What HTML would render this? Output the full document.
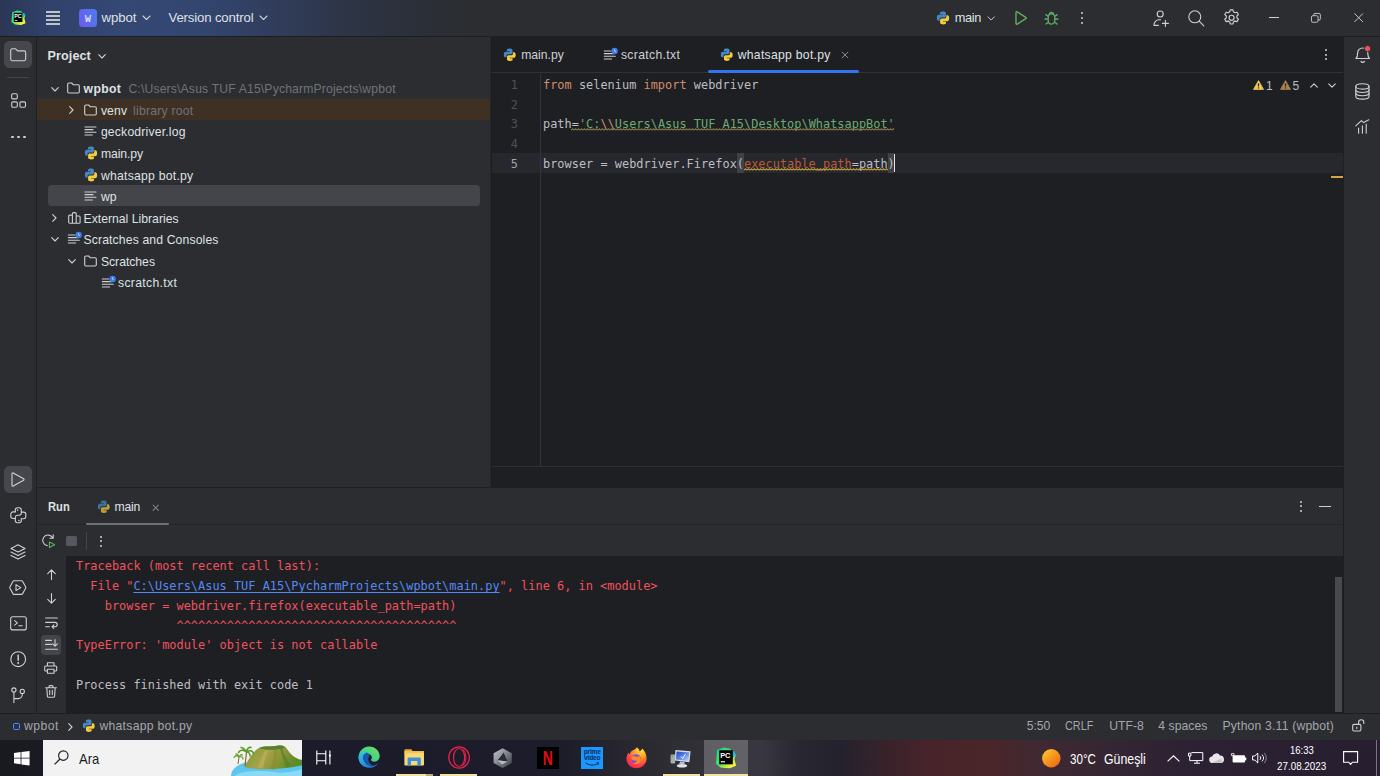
<!DOCTYPE html>
<html><head><meta charset="utf-8"><title>wpbot – whatsapp bot.py</title>
<style>
*{box-sizing:border-box;margin:0;padding:0}
html,body{width:1380px;height:776px;overflow:hidden;background:#1E1F22}
body{position:relative;font-family:"Liberation Sans",sans-serif;font-size:12.2px;color:#DFE1E5;-webkit-font-smoothing:antialiased}
.abs{position:absolute}
.t{position:absolute;white-space:pre;line-height:16px}
.mono{font-family:"DejaVu Sans Mono","Liberation Mono",monospace;font-size:11.9px;letter-spacing:0.02px}
svg{position:absolute;overflow:visible}
.ic{fill:none;stroke:#CED0D6;stroke-width:1.1;stroke-linecap:round;stroke-linejoin:round}
#titlebar{left:0;top:0;width:1380px;height:36px;background:linear-gradient(90deg,#2B3655 0px,#31426B 50px,#344874 120px,#334670 200px,#303C5A 280px,#2D3445 350px,#2B2F37 420px,#2B2D30 480px)}
#lstripe{left:0;top:36px;width:37px;height:677px;background:#2B2D30;border-right:1px solid #1E1F22}
#rstripe{left:1343px;top:36px;width:37px;height:677px;background:#2B2D30;border-left:1px solid #1E1F22}
#project{left:37px;top:36px;width:453px;height:451px;background:#2B2D30}
#editor{left:492px;top:36px;width:851px;height:452px;background:#1E1F22}
#run{left:37px;top:488.4px;width:1306px;height:224.6px;background:#2B2D30}
#status{left:0;top:712.8px;width:1380px;height:27px;background:#2B2D30;border-top:1px solid #1E1F22}
#taskbar{left:0;top:739.7px;width:1380px;height:36.3px;background:linear-gradient(90deg,#19191F 0,#1A1A24 40px,#1B1B29 300px,#1C1C2A 560px,#2A2930 640px,#34333A 720px,#393840 760px,#282630 800px,#24222E 840px,#36222A 880px,#48242A 930px,#4A2529 990px,#3F2932 1040px,#342633 1110px,#2B2133 1200px,#271E30 1380px)}
.muted{color:#6F737A}
.row{position:absolute;left:0;width:453px;height:21.56px}
</style></head><body>

<div id="titlebar" class="abs">
<!-- pycharm logo -->
<svg style="left:10.5px;top:10px" width="15" height="15.5" viewBox="0 0 15 15.5">
<defs><linearGradient id="pcg" x1="0" y1="0" x2="1" y2="1"><stop offset="0" stop-color="#21D789"/><stop offset="0.45" stop-color="#3BE06A"/><stop offset="0.8" stop-color="#E8F03C"/><stop offset="1" stop-color="#FCF84A"/></linearGradient></defs>
<path d="M1.2 2.2 L6 0.4 L10.6 1.2 L11.4 3.4 L14.4 5.4 L13.4 8.6 L14.6 13.2 L10.2 15 L4 14.6 L0.4 12 Z" fill="url(#pcg)"/>
<path d="M10.8 3.2 L13.2 3 L14.4 5.6 L12.6 7.6 Z" fill="#07C3F2"/>
<rect x="2.8" y="2.8" width="8.6" height="9.2" fill="#000"/>
<text x="3.3" y="7.6" font-family="Liberation Sans,sans-serif" font-weight="bold" font-size="5.4" fill="#fff" letter-spacing="-0.2">PC</text>
<rect x="3.8" y="10" width="2.6" height="0.9" fill="#ddd"/>
</svg>
<!-- hamburger -->
<div class="abs" style="left:45.7px;top:11.35px;width:14.4px;height:1.3px;background:#BFC2C9"></div>
<div class="abs" style="left:45.7px;top:15.35px;width:14.4px;height:1.3px;background:#BFC2C9"></div>
<div class="abs" style="left:45.7px;top:19.3px;width:14.4px;height:1.3px;background:#BFC2C9"></div>
<div class="abs" style="left:45.7px;top:23.3px;width:14.4px;height:1.3px;background:#BFC2C9"></div>
<!-- project badge -->
<div class="abs" style="left:79px;top:8.8px;width:18px;height:18px;border-radius:3.5px;background:linear-gradient(75deg,#6D5AF0,#4B7BEF)"></div>
<div class="t" style="left:79px;top:11.2px;width:18px;text-align:center;font-family:'Liberation Mono',monospace;font-size:11.6px;color:#fff;letter-spacing:0;transform:scaleX(0.84)">W</div>
<div class="t" id="tt_wpbot" style="letter-spacing:-0.090px;left:101.5px;top:9.6px;font-size:13.2px">wpbot</div>
<svg style="left:142px;top:15px" width="9" height="6" viewBox="0 0 9 6"><path class="ic" d="M1 1 L4.5 4.5 L8 1"/></svg>
<div class="t" id="tt_vc" style="letter-spacing:-0.154px;left:168.5px;top:9.6px;font-size:13.2px">Version control</div>
<svg style="left:259px;top:15px" width="9" height="6" viewBox="0 0 9 6"><path class="ic" d="M1 1 L4.5 4.5 L8 1"/></svg>
</div>
<div id="tbline" class="abs" style="left:0;top:35.8px;width:1380px;height:1px;background:#1E1F22;z-index:5"></div>

<!--STRIPE-->
<div id="lstripe" class="abs"></div>
<div class="abs" style="left:4.2px;top:41px;width:27.8px;height:27.2px;border-radius:5.5px;background:#45474C"></div>
<svg style="left:10px;top:48.2px" width="16.4" height="13.4" viewBox="0 0 16.4 13.4"><path class="ic" stroke-width="1.4" d="M0.7 2.4 a1.6 1.6 0 0 1 1.6-1.6 h3.3 l2 2.1 h6.5 a1.6 1.6 0 0 1 1.6 1.6 v6.6 a1.6 1.6 0 0 1-1.6 1.6 h-11.8 a1.6 1.6 0 0 1-1.6-1.6 z"/></svg>
<div class="abs" style="left:7.3px;top:77px;width:21.6px;height:1px;background:#43454A"></div>
<svg style="left:10.5px;top:93.4px" width="16" height="15.5" viewBox="0 0 16 15.5"><g class="ic" stroke-width="1.4"><rect x="0.7" y="0.7" width="5.6" height="5.2" rx="1.2"/><rect x="0.7" y="8.9" width="5.6" height="5.4" rx="1.2"/><rect x="8.9" y="8.9" width="5.6" height="5.4" rx="1.2"/></g></svg>
<div class="abs" style="left:11.0px;top:135.6px;width:2.8px;height:2.8px;border-radius:50%;background:#CED0D6"></div>
<div class="abs" style="left:16.8px;top:135.6px;width:2.8px;height:2.8px;border-radius:50%;background:#CED0D6"></div>
<div class="abs" style="left:22.8px;top:135.6px;width:2.8px;height:2.8px;border-radius:50%;background:#CED0D6"></div>
<div class="abs" style="left:4.2px;top:466px;width:27.8px;height:27.2px;border-radius:5.5px;background:#45474C"></div>
<svg style="left:11.4px;top:472px" width="14" height="15" viewBox="0 0 14 15"><path class="ic" stroke-width="1.4" d="M1 1.6 a0.8 0.8 0 0 1 1.2-0.7 l10.4 5.9 a0.8 0.8 0 0 1 0 1.4 l-10.4 5.9 a0.8 0.8 0 0 1-1.2-0.7 z"/></svg>
<svg style="left:9.8px;top:507px" width="16.6" height="16.6" viewBox="0 0 16.6 16.6"><g class="ic" stroke-width="1.4"><path d="M5.3 4.7 v-1.7 a2.2 2.2 0 0 1 2.2-2.2 h1.6 a2.2 2.2 0 0 1 2.2 2.2 v3.1 a2.2 2.2 0 0 1-2.2 2.2 h-1.6 a2.2 2.2 0 0 0-2.2 2.2 v3.1 a2.2 2.2 0 0 0 2.2 2.2 h1.6 a2.2 2.2 0 0 0 2.2-2.2 v-1.7"/><path d="M5.3 4.9 h-2.3 a2.2 2.2 0 0 0-2.2 2.2 v2.2 a2.2 2.2 0 0 0 2.2 2.2 h2.2"/><path d="M11.3 11.7 h2.3 a2.2 2.2 0 0 0 2.2-2.2 v-2.2 a2.2 2.2 0 0 0-2.2-2.2 h-2.2"/></g><circle cx="7.6" cy="3.1" r=".8" fill="#CED0D6"/><circle cx="9" cy="13.5" r=".8" fill="#CED0D6"/></svg>
<svg style="left:10.2px;top:543.5px" width="16" height="16" viewBox="0 0 16 16"><g class="ic" stroke-width="1.4"><path d="M8 0.8 L15 4.4 L8 8 L1 4.4 Z"/><path d="M1 8 L8 11.6 L15 8"/><path d="M1 11.4 L8 15 L15 11.4"/></g></svg>
<svg style="left:9.4px;top:579.6px" width="17.6" height="15.2" viewBox="0 0 17.6 15.2"><g class="ic" stroke-width="1.4"><path d="M4.9 0.8 h7.8 a1 1 0 0 1 .85.5 l3.2 5.8 a1 1 0 0 1 0 1 l-3.2 5.8 a1 1 0 0 1-.85.5 h-7.8 a1 1 0 0 1-.85-.5 l-3.2-5.8 a1 1 0 0 1 0-1 l3.2-5.8 a1 1 0 0 1 .85-.5z"/><path d="M7 4.6 v6 l4.8-3z"/></g></svg>
<svg style="left:9.6px;top:616px" width="17" height="14.6" viewBox="0 0 17 14.6"><g class="ic" stroke-width="1.4"><rect x="0.7" y="0.7" width="15.6" height="13.2" rx="2"/><path d="M4.6 4.6 l2.8 2.3 -2.8 2.3 M8.8 9.8 h3.4"/></g></svg>
<svg style="left:10px;top:651.2px" width="16.4" height="16.4" viewBox="0 0 16.4 16.4"><g class="ic" stroke-width="1.4"><circle cx="8.2" cy="8.2" r="7.4"/><path d="M8.2 4.2 v5" stroke-width="1.5"/></g><circle cx="8.2" cy="11.9" r="1" fill="#CED0D6"/></svg>
<svg style="left:11px;top:686.6px" width="14.4" height="16.4" viewBox="0 0 14.4 16.4"><g class="ic" stroke-width="1.4"><circle cx="2.9" cy="3" r="2.1"/><circle cx="11.3" cy="4.4" r="2.1"/><path d="M2.9 5.2 v10.4 M2.9 11.6 h4.4 a4 4 0 0 0 4-4 v-1"/></g></svg>
<!--PROJECT-->
<div id="project" class="abs"></div>
<div class="abs" style="left:37px;top:98.5px;width:453px;height:21.7px;background:#3E3124"></div>
<div class="abs" style="left:48px;top:185.1px;width:432px;height:21.3px;background:#43454A;border-radius:4px"></div>
<div class="t" id="p_title" style="letter-spacing:0.092px;left:47.5px;top:47.8px;font-weight:bold;font-size:12.6px;letter-spacing:0.1px">Project</div>
<svg style="left:98.2px;top:53.6px" width="8" height="5" viewBox="0 0 8 5"><path class="ic" d="M0.7 0.7 L4 4 L7.3 0.7"/></svg>
<svg style="left:51px;top:86.5px" width="8" height="5" viewBox="0 0 8 5"><path class="ic" d="M0.7 0.7 L4 4 L7.3 0.7"/></svg>
<svg style="left:66.8px;top:82.3px" width="13" height="12" viewBox="0 0 13 12"><path class="ic" d="M0.7 2.2 a1.2 1.2 0 0 1 1.2-1.2 h2.7 l1.6 1.7 h4.9 a1.2 1.2 0 0 1 1.2 1.2 v5.9 a1.2 1.2 0 0 1-1.2 1.2 h-9.2 a1.2 1.2 0 0 1-1.2-1.2 z"/></svg>
<div class="t" id="p_wpbot" style="letter-spacing:0.361px;left:83.6px;top:81.30px;font-weight:bold;letter-spacing:0.35px">wpbot</div>
<div class="t" id="p_path" style="letter-spacing:0.157px;left:128.4px;top:81.30px;color:#6F737A">C:\Users\Asus TUF A15\PycharmProjects\wpbot</div>
<svg style="left:69px;top:106.06px" width="5" height="8" viewBox="0 0 5 8"><path class="ic" d="M0.7 0.7 L4 4 L0.7 7.3"/></svg>
<svg style="left:84px;top:103.86px" width="13" height="12" viewBox="0 0 13 12"><path class="ic" d="M0.7 2.2 a1.2 1.2 0 0 1 1.2-1.2 h2.7 l1.6 1.7 h4.9 a1.2 1.2 0 0 1 1.2 1.2 v5.9 a1.2 1.2 0 0 1-1.2 1.2 h-9.2 a1.2 1.2 0 0 1-1.2-1.2 z"/></svg>
<div class="t" id="p_venv" style="letter-spacing:0.129px;left:100.9px;top:102.86px;">venv</div>
<div class="t" id="p_lib" style="letter-spacing:0.237px;left:133px;top:102.86px;color:#6F737A">library root</div>
<svg style="left:84.9px;top:126.42px" width="12" height="10" viewBox="0 0 12 10"><path class="ic" stroke-linecap="butt" d="M0 1 h11 M0 3.65 h8 M0 6.3 h11 M0 8.95 h7.3"/></svg>
<div class="t" id="p_gecko" style="letter-spacing:0.187px;left:100.9px;top:124.42px;">geckodriver.log</div>
<svg style="left:83.5px;top:146.18px" width="14" height="14" viewBox="0 0 14 14"><path fill="#4786C6" d="M6.9.6c-3.1 0-2.9 1.35-2.9 1.35v1.4h2.95v.42H2.83S.85 3.55.85 6.68c0 3.13 1.73 3.02 1.73 3.02h1.03V8.25s-.06-1.73 1.7-1.73h2.93s1.65.03 1.65-1.6V2.24S10.14.6 6.9.6z"/><path fill="#F5CC3C" d="M7.1 13.4c3.1 0 2.9-1.35 2.9-1.35v-1.4H7.05v-.42h4.12s1.98.22 1.98-2.91c0-3.13-1.73-3.02-1.73-3.02h-1.03v1.45s.06 1.73-1.7 1.73H5.76s-1.65-.03-1.65 1.6v2.68S3.86 13.4 7.1 13.4z"/></svg>
<div class="t" id="p_main" style="letter-spacing:-0.090px;left:100.9px;top:145.98px;">main.py</div>
<svg style="left:83.5px;top:167.74px" width="14" height="14" viewBox="0 0 14 14"><path fill="#4786C6" d="M6.9.6c-3.1 0-2.9 1.35-2.9 1.35v1.4h2.95v.42H2.83S.85 3.55.85 6.68c0 3.13 1.73 3.02 1.73 3.02h1.03V8.25s-.06-1.73 1.7-1.73h2.93s1.65.03 1.65-1.6V2.24S10.14.6 6.9.6z"/><path fill="#F5CC3C" d="M7.1 13.4c3.1 0 2.9-1.35 2.9-1.35v-1.4H7.05v-.42h4.12s1.98.22 1.98-2.91c0-3.13-1.73-3.02-1.73-3.02h-1.03v1.45s.06 1.73-1.7 1.73H5.76s-1.65-.03-1.65 1.6v2.68S3.86 13.4 7.1 13.4z"/></svg>
<div class="t" id="p_wa" style="letter-spacing:0.251px;left:100.9px;top:167.54px;">whatsapp bot.py</div>
<svg style="left:84.9px;top:191.10000000000002px" width="12" height="10" viewBox="0 0 12 10"><path class="ic" stroke-linecap="butt" d="M0 1 h11 M0 3.65 h8 M0 6.3 h11 M0 8.95 h7.3"/></svg>
<div class="t" id="p_wp" style="letter-spacing:-0.062px;left:100.9px;top:189.10px;">wp</div>
<svg style="left:52px;top:213.85999999999999px" width="5" height="8" viewBox="0 0 5 8"><path class="ic" d="M0.7 0.7 L4 4 L0.7 7.3"/></svg>
<svg style="left:68px;top:211.66px" width="13" height="12" viewBox="0 0 13 12"><path class="ic" d="M0.7 4.2 a1.1 1.1 0 0 1 1.1-1.1 h2.6 v8.2 h-2.6 a1.1 1.1 0 0 1-1.1-1.1z M4.4 1.7 a1.1 1.1 0 0 1 1.1-1.1 h1.6 a1.1 1.1 0 0 1 1.1 1.1 v9.6 h-3.8z M8.2 4 h2.8 a1.1 1.1 0 0 1 1.1 1.1 v5.1 a1.1 1.1 0 0 1-1.1 1.1 h-2.8z"/></svg>
<div class="t" id="p_ext" style="letter-spacing:0.015px;left:83.5px;top:210.66px;">External Libraries</div>
<svg style="left:51px;top:237.42px" width="8" height="5" viewBox="0 0 8 5"><path class="ic" d="M0.7 0.7 L4 4 L7.3 0.7"/></svg>
<svg style="left:67.5px;top:232.42px" width="14" height="12" viewBox="0 0 14 12"><path class="ic" stroke-linecap="butt" d="M0.3 3 h6.5 M0.3 5.65 h9.5 M0.3 8.3 h11 M0.3 10.95 h7.3"/><circle cx="10.6" cy="3" r="3.2" fill="#3D7DEB"/><path d="M10.6 1.4 v1.7 l1.1 .6" stroke="#fff" stroke-width=".7" fill="none"/></svg>
<div class="t" id="p_sc" style="letter-spacing:0.134px;left:83.5px;top:232.22px;">Scratches and Consoles</div>
<svg style="left:68.3px;top:258.98px" width="8" height="5" viewBox="0 0 8 5"><path class="ic" d="M0.7 0.7 L4 4 L7.3 0.7"/></svg>
<svg style="left:84px;top:254.78000000000003px" width="13" height="12" viewBox="0 0 13 12"><path class="ic" d="M0.7 2.2 a1.2 1.2 0 0 1 1.2-1.2 h2.7 l1.6 1.7 h4.9 a1.2 1.2 0 0 1 1.2 1.2 v5.9 a1.2 1.2 0 0 1-1.2 1.2 h-9.2 a1.2 1.2 0 0 1-1.2-1.2 z"/></svg>
<div class="t" id="p_scr" style="letter-spacing:-0.012px;left:100.9px;top:253.78px;">Scratches</div>
<svg style="left:101.8px;top:275.53999999999996px" width="14" height="12" viewBox="0 0 14 12"><path class="ic" stroke-linecap="butt" d="M0.3 3 h6.5 M0.3 5.65 h9.5 M0.3 8.3 h11 M0.3 10.95 h7.3"/><circle cx="10.6" cy="3" r="3.2" fill="#3D7DEB"/><path d="M10.6 1.4 v1.7 l1.1 .6" stroke="#fff" stroke-width=".7" fill="none"/></svg>
<div class="t" id="p_stxt" style="letter-spacing:0.329px;left:118px;top:275.34px;">scratch.txt</div>
<!--EDITOR-->
<div id="editor" class="abs"></div>
<div class="abs" style="left:490px;top:36.8px;width:1px;height:450.4px;background:#26272A"></div><div class="abs" style="left:491px;top:36.8px;width:1px;height:450.4px;background:#1B1C1E"></div>
<div class="abs" style="left:492px;top:72.2px;width:851px;height:1px;background:#303236"></div>
<svg style="left:503px;top:48.3px" width="13.5" height="13.5" viewBox="0 0 14 14"><path fill="#4786C6" d="M6.9.6c-3.1 0-2.9 1.35-2.9 1.35v1.4h2.95v.42H2.83S.85 3.55.85 6.68c0 3.13 1.73 3.02 1.73 3.02h1.03V8.25s-.06-1.73 1.7-1.73h2.93s1.65.03 1.65-1.6V2.24S10.14.6 6.9.6z"/><path fill="#F5CC3C" d="M7.1 13.4c3.1 0 2.9-1.35 2.9-1.35v-1.4H7.05v-.42h4.12s1.98.22 1.98-2.91c0-3.13-1.73-3.02-1.73-3.02h-1.03v1.45s.06 1.73-1.7 1.73H5.76s-1.65-.03-1.65 1.6v2.68S3.86 13.4 7.1 13.4z"/></svg>
<div class="t" id="e_t1" style="letter-spacing:0.002px;left:521.2px;top:47.2px;color:#CED0D6">main.py</div>
<svg style="left:603.5px;top:48.4px" width="14" height="12" viewBox="0 0 14 12"><path class="ic" stroke-linecap="butt" d="M0.3 3 h6.5 M0.3 5.65 h9.5 M0.3 8.3 h11 M0.3 10.95 h7.3"/><circle cx="10.6" cy="3" r="3.2" fill="#3D7DEB"/><path d="M10.6 1.4 v1.7 l1.1 .6" stroke="#fff" stroke-width=".7" fill="none"/></svg>
<div class="t" id="e_t2" style="letter-spacing:0.338px;left:620.9px;top:47.2px;color:#CED0D6">scratch.txt</div>
<svg style="left:719.5px;top:48.3px" width="13.5" height="13.5" viewBox="0 0 14 14"><path fill="#4786C6" d="M6.9.6c-3.1 0-2.9 1.35-2.9 1.35v1.4h2.95v.42H2.83S.85 3.55.85 6.68c0 3.13 1.73 3.02 1.73 3.02h1.03V8.25s-.06-1.73 1.7-1.73h2.93s1.65.03 1.65-1.6V2.24S10.14.6 6.9.6z"/><path fill="#F5CC3C" d="M7.1 13.4c3.1 0 2.9-1.35 2.9-1.35v-1.4H7.05v-.42h4.12s1.98.22 1.98-2.91c0-3.13-1.73-3.02-1.73-3.02h-1.03v1.45s.06 1.73-1.7 1.73H5.76s-1.65-.03-1.65 1.6v2.68S3.86 13.4 7.1 13.4z"/></svg>
<div class="t" id="e_t3" style="letter-spacing:0.285px;left:737.7px;top:47.2px;color:#DFE1E5">whatsapp bot.py</div>
<svg style="left:841px;top:51px" width="8" height="8" viewBox="0 0 8 8"><path d="M0.8 0.8 L7.2 7.2 M7.2 0.8 L0.8 7.2" stroke="#868A91" stroke-width="1" fill="none"/></svg>
<div class="abs" style="left:708px;top:70.3px;width:150.6px;height:3.2px;border-radius:1.6px;background:#3574F0"></div>
<div class="abs" style="left:1325.1px;top:49.2px;width:2px;height:2px;border-radius:50%;background:#CED0D6"></div>
<div class="abs" style="left:1325.1px;top:53.6px;width:2px;height:2px;border-radius:50%;background:#CED0D6"></div>
<div class="abs" style="left:1325.1px;top:58px;width:2px;height:2px;border-radius:50%;background:#CED0D6"></div>
<div class="abs" style="left:492px;top:153.08px;width:851px;height:20px;background:#26282E"></div>
<div class="abs" style="left:492px;top:466px;width:851px;height:1px;background:#2D2F33"></div>
<div class="abs" style="left:540px;top:74px;width:1px;height:392px;background:#313438"></div>
<div class="abs" style="left:737.3px;top:153.08px;width:6.9px;height:20px;background:#3F4146"></div>
<div class="abs" style="left:887.6px;top:153.08px;width:6.9px;height:20px;background:#3F4146"></div>
<div class="t mono" style="left:497px;width:21px;text-align:right;top:77.00px;color:#4B5059">1</div>
<div class="t mono" style="left:497px;width:21px;text-align:right;top:96.72px;color:#4B5059">2</div>
<div class="t mono" style="left:497px;width:21px;text-align:right;top:116.44px;color:#4B5059">3</div>
<div class="t mono" style="left:497px;width:21px;text-align:right;top:136.16px;color:#4B5059">4</div>
<div class="t mono" style="left:497px;width:21px;text-align:right;top:155.88px;color:#A1A3AB">5</div>
<div class="t mono" id="e_l1" style="left:543px;top:77.00px;color:#BCBEC4"><span style="color:#CF8E6D">from</span> selenium <span style="color:#CF8E6D">import</span> webdriver</div>
<div class="t mono" id="e_l3" style="left:543px;top:116.44px;color:#BCBEC4">path=<span style="color:#6AAB73">'C:<span style="color:#CF8E6D">\\</span>Users\Asus TUF A15\Desktop\WhatsappBot'</span></div>
<div class="t mono" id="e_l5" style="left:543px;top:155.88px;color:#BCBEC4">browser = webdriver.Firefox(<span style="color:#BD5A35">executable_path</span>=path)</div>
<svg style="left:571.4px;top:127.94px" width="323.1" height="3" viewBox="0 0 323.1 3"><defs><pattern id="wv1" width="3" height="3" patternUnits="userSpaceOnUse"><path d="M0 2.2 L1.5 0.8 L3 2.2" fill="none" stroke="#857A50" stroke-width="1.05"/></pattern></defs><rect width="323.1" height="3" fill="url(#wv1)"/></svg>
<svg style="left:744.2px;top:167.78px" width="144.0" height="3" viewBox="0 0 144.0 3"><defs><pattern id="wv2" width="3" height="3" patternUnits="userSpaceOnUse"><path d="M0 2.2 L1.5 0.8 L3 2.2" fill="none" stroke="#CBA43C" stroke-width="1.05"/></pattern></defs><rect width="144.0" height="3" fill="url(#wv2)"/></svg>
<div class="abs" style="left:894px;top:154.18px;width:1.4px;height:17.4px;background:#DFE1E5"></div>
<svg style="left:1253px;top:80px" width="11" height="10" viewBox="0 0 11 10"><path d="M5.5 0.6 L10.5 9.4 H0.5 Z" fill="#F2C55C" stroke="#F2C55C" stroke-width="0.8" stroke-linejoin="round"/><path d="M5.5 3.4 v3" stroke="#1E1F22" stroke-width="1.2"/><circle cx="5.5" cy="7.9" r=".7" fill="#1E1F22"/></svg>
<div class="t" style="left:1266px;top:77.6px;color:#BCBEC4;font-size:12px">1</div>
<svg style="left:1279.5px;top:80px" width="11" height="10" viewBox="0 0 11 10"><path d="M5.5 0.6 L10.5 9.4 H0.5 Z" fill="#A9834F" stroke="#A9834F" stroke-width="0.8" stroke-linejoin="round"/><path d="M5.5 3.4 v3" stroke="#1E1F22" stroke-width="1.2"/><circle cx="5.5" cy="7.9" r=".7" fill="#1E1F22"/></svg>
<div class="t" style="left:1292.5px;top:77.6px;color:#BCBEC4;font-size:12px">5</div>
<svg style="left:1309.5px;top:83px" width="8" height="5" viewBox="0 0 8 5"><path class="ic" d="M0.7 4.2 L4 0.9 L7.3 4.2"/></svg>
<svg style="left:1328px;top:83px" width="8" height="5" viewBox="0 0 8 5"><path class="ic" d="M0.7 0.8 L4 4.1 L7.3 0.8"/></svg>
<div class="abs" style="left:1330.5px;top:176px;width:12px;height:2px;background:#D9A343"></div>
<!--RUN-->
<div id="run" class="abs"></div>
<div class="t" id="r_run" style="transform:scaleX(0.8863);transform-origin:0 0;left:47.5px;top:498.7px;font-weight:bold;font-size:12.6px">Run</div>
<svg style="opacity:.72;left:96.7px;top:500px" width="13.5" height="13.5" viewBox="0 0 14 14"><path fill="#4786C6" d="M6.9.6c-3.1 0-2.9 1.35-2.9 1.35v1.4h2.95v.42H2.83S.85 3.55.85 6.68c0 3.13 1.73 3.02 1.73 3.02h1.03V8.25s-.06-1.73 1.7-1.73h2.93s1.65.03 1.65-1.6V2.24S10.14.6 6.9.6z"/><path fill="#F5CC3C" d="M7.1 13.4c3.1 0 2.9-1.35 2.9-1.35v-1.4H7.05v-.42h4.12s1.98.22 1.98-2.91c0-3.13-1.73-3.02-1.73-3.02h-1.03v1.45s.06 1.73-1.7 1.73H5.76s-1.65-.03-1.65 1.6v2.68S3.86 13.4 7.1 13.4z"/></svg>
<div class="t" id="r_main" style="letter-spacing:-0.178px;left:114.5px;top:498.7px">main</div>
<svg style="left:152px;top:503.6px" width="7.4" height="7.4" viewBox="0 0 8 8"><path d="M0.8 0.8 L7.2 7.2 M7.2 0.8 L0.8 7.2" stroke="#868A91" stroke-width="1.1" fill="none"/></svg>
<div class="abs" style="left:37px;top:524px;width:1306px;height:1px;background:#232427"></div>
<div class="abs" style="left:86px;top:522.8px;width:83px;height:2.5px;border-radius:1.3px;background:#6D7077"></div>
<div class="abs" style="left:1300px;top:500.8px;width:2px;height:2px;border-radius:50%;background:#CED0D6"></div>
<div class="abs" style="left:1300px;top:505.2px;width:2px;height:2px;border-radius:50%;background:#CED0D6"></div>
<div class="abs" style="left:1300px;top:509.6px;width:2px;height:2px;border-radius:50%;background:#CED0D6"></div>
<div class="abs" style="left:1319px;top:505.6px;width:11.8px;height:1.3px;background:#CED0D6"></div>
<svg style="left:41.5px;top:534.4px" width="14" height="14" viewBox="0 0 14 14"><path class="ic" stroke-width="1.15" d="M5.2 11.6 a5.3 5.3 0 1 1 5.6-7.6 M11.2 0.9 v3.3 h-3.3"/><path d="M7.4 8 l5.2 2.8 -5.2 2.8z" fill="#2B2D30" stroke="#5FAD65" stroke-width="1.1" stroke-linejoin="round"/></svg>
<div class="abs" style="left:66.4px;top:535.8px;width:10.9px;height:10.7px;border-radius:1.5px;background:#55585E"></div>
<div class="abs" style="left:86px;top:531.5px;width:1px;height:18px;background:#43454A"></div>
<div class="abs" style="left:100.2px;top:535.6px;width:2px;height:2px;border-radius:50%;background:#CED0D6"></div>
<div class="abs" style="left:100.2px;top:540.3px;width:2px;height:2px;border-radius:50%;background:#CED0D6"></div>
<div class="abs" style="left:100.2px;top:545px;width:2px;height:2px;border-radius:50%;background:#CED0D6"></div>
<div class="abs" style="left:65.5px;top:556px;width:1277.5px;height:157px;background:#1E1F22"></div>
<div class="abs" style="left:1335px;top:577.2px;width:7px;height:134.6px;background:#47494C"></div>
<svg style="left:46.6px;top:569px" width="9" height="11" viewBox="0 0 9 11"><path class="ic" stroke-width="1.15" d="M4.5 10.4 V0.8 M0.7 4.6 L4.5 0.8 L8.3 4.6"/></svg>
<svg style="left:46.6px;top:592.6px" width="9" height="11" viewBox="0 0 9 11"><path class="ic" stroke-width="1.15" d="M4.5 0.6 V10.2 M0.7 6.4 L4.5 10.2 L8.3 6.4"/></svg>
<svg style="left:44.6px;top:616.6px" width="13" height="11" viewBox="0 0 13 11"><path class="ic" stroke-width="1.15" d="M0.6 1 H12.4 M0.6 5.4 H10 a2.2 2.2 0 0 1 0 4.4 H7.2 M8.8 8 L7 9.8 L8.8 11.4 M0.6 9.8 H4.4"/></svg>
<div class="abs" style="left:40.7px;top:634.7px;width:20.2px;height:20.2px;border-radius:4px;background:#43454A"></div>
<svg style="left:44.6px;top:639.4px" width="13" height="11" viewBox="0 0 13 11"><path class="ic" stroke-width="1.15" d="M0.6 1.4 H6.4 M0.6 5.4 H6.4 M0.6 10.2 H12.4 M10 0.6 V7 M7.6 4.8 L10 7.2 L12.4 4.8"/></svg>
<svg style="left:44.4px;top:662px" width="13.4" height="12" viewBox="0 0 13.4 12"><path class="ic" stroke-width="1.15" d="M3.4 4 V0.7 H10 V4 M3.4 9 H1.7 a1 1 0 0 1-1-1 V5 a1 1 0 0 1 1-1 H11.7 a1 1 0 0 1 1 1 V8 a1 1 0 0 1-1 1 H10 M3.4 7.2 H10 V11.3 H3.4 Z"/></svg>
<svg style="left:45px;top:685.4px" width="12" height="13" viewBox="0 0 12 13"><path class="ic" stroke-width="1.15" d="M0.6 2.8 H11.4 M4 2.8 V1.6 a1 1 0 0 1 1-1 H7 a1 1 0 0 1 1 1 V2.8 M1.8 2.8 L2.4 11.4 a1 1 0 0 0 1 .9 H8.6 a1 1 0 0 0 1-.9 L10.2 2.8 M4.7 5.4 V9.6 M7.3 5.4 V9.6"/></svg>
<div class="t mono" id="c_0" style="left:76px;top:558.20px;color:#F0525F">Traceback (most recent call last):</div>
<div class="t mono" id="c_1" style="left:76px;top:578.00px;color:#F0525F">  File "<span style="color:#548AF7;text-decoration:underline;text-underline-offset:2px">C:\Users\Asus TUF A15\PycharmProjects\wpbot\main.py</span>", line 6, in &lt;module&gt;</div>
<div class="t mono" id="c_2" style="left:76px;top:597.80px;color:#F0525F">    browser = webdriver.firefox(executable_path=path)</div>
<div class="t mono" id="c_3" style="left:76px;top:617.60px;color:#F0525F">              ^^^^^^^^^^^^^^^^^^^^^^^^^^^^^^^^^^^^^^^</div>
<div class="t mono" id="c_4" style="left:76px;top:637.40px;color:#F0525F">TypeError: 'module' object is not callable</div>
<div class="t mono" id="c_6" style="left:76px;top:677.00px;color:#BCBEC4">Process finished with exit code 1</div>
<!--MISC-->
<div id="rstripe" class="abs"></div>
<svg style="left:1353.6px;top:45.2px" width="17.4" height="19" viewBox="0 0 16 18"><g class="ic" stroke-width="1.5"><path d="M1.6 12.8 c1.3-1.2 1.6-2.4 1.6-5.2 a4.8 4.8 0 0 1 9.6 0 c0 2.8.3 4 1.6 5.2z"/><path d="M6.4 15.4 a1.7 1.7 0 0 0 3.2 0"/></g><circle cx="12.6" cy="3.4" r="3" fill="#F0525F" stroke="#2B2D30" stroke-width="0.9"/></svg>
<svg style="left:1354.6px;top:82.6px" width="14.8" height="17" viewBox="0 0 14.8 17"><g class="ic" stroke-width="1.5"><ellipse cx="7.4" cy="3.4" rx="6.6" ry="2.7"/><path d="M0.8 3.4 V13.4 c0 1.5 3 2.7 6.6 2.7 s6.6-1.2 6.6-2.7 V3.4"/><path d="M0.8 6.8 c0 1.5 3 2.7 6.6 2.7 s6.6-1.2 6.6-2.7"/><path d="M0.8 10.1 c0 1.5 3 2.7 6.6 2.7 s6.6-1.2 6.6-2.7"/></g></svg>
<svg style="left:1354.8px;top:119.4px" width="15" height="15" viewBox="0 0 15 15"><g class="ic" stroke-width="1.5"><path d="M0.8 6.8 L6.4 1.6 L8.6 3.6 L13.8 0.8"/><path d="M3.6 9 V14.2 M7.4 6.8 V14.2 M11.2 5 V14.2"/></g></svg>
<svg style="left:935.6px;top:11px" width="14" height="14" viewBox="0 0 14 14"><path fill="#4786C6" d="M6.9.6c-3.1 0-2.9 1.35-2.9 1.35v1.4h2.95v.42H2.83S.85 3.55.85 6.68c0 3.13 1.73 3.02 1.73 3.02h1.03V8.25s-.06-1.73 1.7-1.73h2.93s1.65.03 1.65-1.6V2.24S10.14.6 6.9.6z"/><path fill="#F5CC3C" d="M7.1 13.4c3.1 0 2.9-1.35 2.9-1.35v-1.4H7.05v-.42h4.12s1.98.22 1.98-2.91c0-3.13-1.73-3.02-1.73-3.02h-1.03v1.45s.06 1.73-1.7 1.73H5.76s-1.65-.03-1.65 1.6v2.68S3.86 13.4 7.1 13.4z"/></svg>
<div class="t" id="tt_main" style="letter-spacing:-0.357px;left:954.8px;top:10.3px;font-size:12.8px">main</div>
<svg style="left:986.5px;top:15.6px" width="8.4" height="5.4" viewBox="0 0 9 6"><path class="ic" stroke="#9DA0A8" d="M1 1 L4.5 4.5 L8 1"/></svg>
<svg style="left:1014.6px;top:11.2px" width="12" height="14" viewBox="0 0 12 14"><path d="M1 1.6 a0.8 0.8 0 0 1 1.2-0.7 l8.6 5.4 a0.8 0.8 0 0 1 0 1.4 l-8.6 5.4 a0.8 0.8 0 0 1-1.2-0.7 z" fill="none" stroke="#5FAD65" stroke-width="1.4" stroke-linejoin="round"/></svg>
<svg style="left:1043.6px;top:10.6px" width="15" height="15" viewBox="0 0 15 15"><g fill="none" stroke="#5FAD65" stroke-width="1.3" stroke-linecap="round" stroke-linejoin="round"><path d="M4.2 6.2 a3.3 3.3 0 0 1 6.6 0 v3.6 a3.3 3.3 0 0 1-6.6 0z"/><path d="M5.4 3.6 a2.1 2.1 0 0 1 4.2 0"/><path d="M4.2 8 H1 M10.8 8 H14 M4.4 5.4 L1.8 3.6 M10.6 5.4 L13.2 3.6 M4.6 11 L2 13 M10.4 11 L13 13"/></g></svg>
<div class="abs" style="left:1080.8px;top:11.9px;width:2.2px;height:2.2px;border-radius:50%;background:#CED0D6"></div>
<div class="abs" style="left:1080.8px;top:17.099999999999998px;width:2.2px;height:2.2px;border-radius:50%;background:#CED0D6"></div>
<div class="abs" style="left:1080.8px;top:22.299999999999997px;width:2.2px;height:2.2px;border-radius:50%;background:#CED0D6"></div>
<svg style="left:1152.6px;top:9.6px" width="17" height="17" viewBox="0 0 17 17"><g class="ic" stroke-width="1.45"><circle cx="7.2" cy="4" r="3"/><path d="M7.6 9.8 h-1.6 a5 5 0 0 0-5 5 v.6 h4.4"/><path d="M12.4 10.4 v6 M9.4 13.4 h6"/></g></svg>
<svg style="left:1187.6px;top:10.4px" width="16.6" height="16.6" viewBox="0 0 16.6 16.6"><g class="ic" stroke-width="1.45"><circle cx="6.8" cy="6.8" r="6"/><path d="M11.2 11.2 L15.8 15.8"/></g></svg>
<svg style="left:1223.2px;top:9.2px" width="17.2" height="17.6" viewBox="-8.2 -8.4 16.4 16.8"><g class="ic" stroke-width="1.45"><circle cx="0" cy="0" r="2.4"/><path d="M-1.3 -7.6 h2.6 l.5 1.9 1.5.85 1.9-.5 1.3 2.25 -1.4 1.4 v1.7 l1.4 1.4 -1.3 2.25 -1.9-.5 -1.5.85 -.5 1.9 h-2.6 l-.5-1.9 -1.5-.85 -1.9.5 -1.3-2.25 1.4-1.4 v-1.7 l-1.4-1.4 1.3-2.25 1.9.5 1.5-.85z"/></g></svg>
<div class="abs" style="left:1268.5px;top:16.5px;width:10.2px;height:1.1px;background:#CED0D6"></div>
<svg style="left:1311.2px;top:12.9px" width="9.8" height="9.8" viewBox="0 0 11 11"><g fill="none" stroke="#CED0D6" stroke-width="1"><rect x="0.5" y="3" width="7.4" height="7.4" rx="1.6"/><path d="M3 2.8 V2 a1.5 1.5 0 0 1 1.5-1.5 H9 a1.5 1.5 0 0 1 1.5 1.5 V6.5 a1.5 1.5 0 0 1-1.5 1.5 H8"/></g></svg>
<svg style="left:1353.8px;top:13.3px" width="9.4" height="9.4" viewBox="0 0 10 10"><path d="M0.5 0.5 L9.5 9.5 M9.5 0.5 L0.5 9.5" stroke="#CED0D6" stroke-width="1" fill="none"/></svg>
<div id="status" class="abs"></div>
<div class="abs" style="left:13px;top:723px;width:7.2px;height:6.8px;border:1.2px solid #548AF7;border-radius:1.6px;background:#25324D"></div>
<div class="t" id="s_wpbot" style="letter-spacing:0.460px;left:24px;top:718px;color:#A3A6AE">wpbot</div>
<svg style="left:68px;top:722.6px" width="5" height="8" viewBox="0 0 5 8"><path class="ic" stroke="#8C8F97" stroke-width="1" d="M0.7 0.7 L4 4 L0.7 7.3"/></svg>
<svg style="left:81.8px;top:719px" width="13.5" height="13.5" viewBox="0 0 14 14"><path fill="#4786C6" d="M6.9.6c-3.1 0-2.9 1.35-2.9 1.35v1.4h2.95v.42H2.83S.85 3.55.85 6.68c0 3.13 1.73 3.02 1.73 3.02h1.03V8.25s-.06-1.73 1.7-1.73h2.93s1.65.03 1.65-1.6V2.24S10.14.6 6.9.6z"/><path fill="#F5CC3C" d="M7.1 13.4c3.1 0 2.9-1.35 2.9-1.35v-1.4H7.05v-.42h4.12s1.98.22 1.98-2.91c0-3.13-1.73-3.02-1.73-3.02h-1.03v1.45s.06 1.73-1.7 1.73H5.76s-1.65-.03-1.65 1.6v2.68S3.86 13.4 7.1 13.4z"/></svg>
<div class="t" id="s_wa" style="letter-spacing:0.285px;left:99.4px;top:718px;color:#A3A6AE">whatsapp bot.py</div>
<div class="t" id="s_pos" style="letter-spacing:-0.010px;left:1026.7px;top:718px;color:#A3A6AE">5:50</div>
<div class="t" id="s_crlf" style="transform:scaleX(0.8892);transform-origin:0 0;left:1064.7px;top:718px;color:#A3A6AE">CRLF</div>
<div class="t" id="s_utf" style="letter-spacing:-0.029px;left:1109.3px;top:718px;color:#A3A6AE">UTF-8</div>
<div class="t" id="s_sp" style="letter-spacing:0.029px;left:1158.3px;top:718px;color:#A3A6AE">4 spaces</div>
<div class="t" id="s_py" style="letter-spacing:0.180px;left:1222.5px;top:718px;color:#A3A6AE">Python 3.11 (wpbot)</div>
<svg style="left:1351.6px;top:719.4px" width="13" height="13" viewBox="0 0 13 13"><g class="ic" stroke="#B4B8BF" stroke-width="1.2"><rect x="0.7" y="5.4" width="8.2" height="6.6" rx="1.4"/><path d="M6.6 5.2 V3.4 a2.6 2.6 0 0 1 5.2 0 V4.4 M4.8 8 V9.6"/></g></svg>
<!--TASKBAR-->
<div id="taskbar" class="abs"></div>
<svg style="left:13.6px;top:751px" width="15.6" height="14.4" viewBox="0 0 15.6 14.4"><path fill="#fff" d="M0 2.1 L6.6 1.1 V6.8 H0z M7.4 1 L15.6 0 V6.8 H7.4z M0 7.6 H6.6 V13.3 L0 12.3z M7.4 7.6 H15.6 V14.4 L7.4 13.4z"/></svg>
<div class="abs" style="left:43.1px;top:740.4px;width:259.1px;height:35.6px;background:#F2F2F2;overflow:hidden"><svg style="left:186px;top:0" width="74" height="36" viewBox="0 0 74 36"><defs><linearGradient id="mtn" x1="0" y1="0" x2="1" y2="0.3"><stop offset="0" stop-color="#6E9A2E"/><stop offset="0.45" stop-color="#A9A24A"/><stop offset="0.7" stop-color="#8A9636"/><stop offset="1" stop-color="#5E8A28"/></linearGradient></defs><path d="M2 36 C2 28 12 21 26 22 C44 20 60 24 74 19 V36z" fill="#5CC6EE"/><path d="M6 36 C10 31 30 30 44 32 C56 34 66 31 74 29 V36z" fill="#8ADAF6"/><path d="M15 27 C19 21 23 12 30 8 C36 5 42 7 49 5.5 C53 4.8 56 6 58 9 C62 15 67 19 74 20.5 V25 C60 29 30 31 15 27z" fill="url(#mtn)"/><path d="M30 8 C36 5.6 43 7.4 49 5.6 C53 5 55 6 56 7.4 C50 10 38 11 30 8z" fill="#56802C"/><path d="M36 10 C34 16 31 22 29 28 L34 28.6 C35 22 37 16 39 10.6z" fill="#C2B660" opacity=".55"/><path d="M45 9.6 C45 16 44 22 42 29.4 L47 29.4 C48 22 48 15 48 9z" fill="#8C8A34" opacity=".6"/><path d="M53 8 C55 14 58 20 62 26 L57 27.4 C55 21 53 15 51 9z" fill="#54802A" opacity=".7"/><path d="M16 26 L17.5 12" stroke="#8A6A34" stroke-width="1.2"/><path d="M9 24 L10 17" stroke="#8A6A34" stroke-width="1"/><path d="M17.5 12 C14 9 11 10 9.5 12.5 M17.5 12 C15 8 13.5 7.5 12 7.5 M17.5 12 C18 8 20 7 22 7.5 M17.5 12 C21 9.5 24 11 24.5 13.5 M17.5 12 C20 12 21 14 21 16" stroke="#5F9A2C" stroke-width="1.6" fill="none" stroke-linecap="round"/><path d="M10 17 C8 15 6 15.5 5 17.5 M10 17 C9 14.5 8 14 7 14 M10 17 C11 14.5 12.5 14.5 13.5 15 M10 17 C12.5 16 14 17.5 14 19" stroke="#6FA434" stroke-width="1.3" fill="none" stroke-linecap="round"/></svg></div>
<svg style="left:54px;top:750.4px" width="15" height="15" viewBox="0 0 15 15"><circle cx="9.3" cy="5.6" r="4.7" fill="none" stroke="#222" stroke-width="1.2"/><path d="M6 9 L0.6 14.4" stroke="#222" stroke-width="1.3"/></svg>
<div class="t" id="k_ara" style="transform:scaleX(0.8935);transform-origin:0 0;left:79.2px;top:749.6px;font-size:14.6px;line-height:18px;color:#1b1b1b;font-family:'Liberation Sans',sans-serif">Ara</div>
<svg style="left:315.6px;top:750.4px" width="15" height="14.8" viewBox="0 0 15 14.8"><g fill="none" stroke="#fff" stroke-width="1.1"><path d="M0.8 0.4 V14.4 M9.8 0.4 V14.4 M0.8 3.8 H9.8 M0.8 10.8 H9.8 M13.9 0.4 V14.4"/></g><circle cx="13.9" cy="5.6" r="1.1" fill="#fff"/></svg>
<svg style="left:358.4px;top:746.4px" width="22.2" height="22.2" viewBox="0 0 22 22"><defs><linearGradient id="ed1" x1="0" y1="0" x2="1" y2="1"><stop offset="0" stop-color="#36C6E8"/><stop offset="1" stop-color="#1B63C6"/></linearGradient><linearGradient id="ed2" x1="0" y1="1" x2="1" y2="0"><stop offset="0" stop-color="#2CB9E4"/><stop offset="0.6" stop-color="#4FD67A"/><stop offset="1" stop-color="#7EE05A"/></linearGradient></defs><path d="M11 0.5 C17 0.5 21.5 5 21.5 10 C21.5 13.5 19 15.5 16.5 15.5 C14.5 15.5 13 14.8 13 13.8 C13 13 13.8 12.8 13.8 11.5 C13.8 9.4 11.6 7.8 9.2 7.8 C5 7.8 1.2 11 0.6 13 C-0.2 6 4.5 0.5 11 0.5z" fill="url(#ed2)"/><path d="M0.6 12.5 C0.3 8.5 4 6.2 8.6 6.4 C5.8 7.6 4.8 10.5 5.6 13.5 C6.8 18 11.5 20.2 15.5 19.6 C17.5 19.2 19.5 18 20.4 16.4 C18.8 20 15.2 21.6 11.4 21.6 C5.4 21.6 1 17.6 0.6 12.5z" fill="url(#ed1)"/><path d="M8.6 6.4 C5.8 7.6 4.8 10.5 5.6 13.5 C6.8 18 11.5 20.2 15.5 19.6 C12 18.5 9.8 15.8 10.2 12.4 C10.4 11 11 10 11.8 9.4 C11 8 9.6 6.6 8.6 6.4z" fill="#1A57B0"/></svg>
<svg style="left:403.8px;top:748.6px" width="20.4" height="17.4" viewBox="0 0 20.4 17.4"><path d="M0.4 1.2 a1 1 0 0 1 1-1 H7.2 L9 2.4 H0.4z" fill="#E9A73C"/><rect x="0.4" y="2.2" width="19.6" height="14.4" rx="0.8" fill="#F9D975"/><path d="M3.6 16.6 V9.6 a1 1 0 0 1 1-1 H15.8 a1 1 0 0 1 1 1 V16.6 H13.4 V12 H7 V16.6z" fill="#3C8FDD"/><rect x="0.4" y="2.2" width="19.6" height="2" fill="#F3C555"/></svg>
<svg style="left:447.6px;top:746.2px" width="22.2" height="23" viewBox="0 0 22.2 23"><ellipse cx="11.1" cy="11.5" rx="10.3" ry="10.7" fill="none" stroke="#E2244B" stroke-width="1.3"/><ellipse cx="11.1" cy="11.5" rx="5.6" ry="9" fill="none" stroke="#E2244B" stroke-width="1.2"/><path d="M14.5 3.2 C19 6 19 17 14.5 19.8" fill="none" stroke="#E2244B" stroke-width="1"/></svg>
<svg style="left:493.4px;top:748.2px" width="19.4" height="20.2" viewBox="0 0 19.4 20.2"><defs><linearGradient id="hx" x1="0" y1="0" x2="1" y2="1"><stop offset="0" stop-color="#C8CDD4"/><stop offset="0.5" stop-color="#7C8088"/><stop offset="1" stop-color="#3A3C42"/></linearGradient></defs><path d="M9.7 0.3 L18.8 5.2 V15 L9.7 19.9 L0.6 15 V5.2z" fill="url(#hx)"/><path d="M10.6 4.4 L14.6 13.4 L4.4 12.2z" fill="#2A2C32"/><path d="M10.6 4.4 L4.4 12.2 L3 9z" fill="#9DA2AA"/><path d="M4.4 12.2 L14.6 13.4 L9 16.4z" fill="#B8BCC4"/></svg>
<div class="abs" style="left:537px;top:746.9px;width:21.5px;height:21.8px;background:#000"></div>
<div class="t" style="left:537px;top:747.6px;width:21.5px;text-align:center;font-size:20.5px;line-height:20px;font-weight:bold;color:#E50914;transform:scaleX(0.68);font-family:'Liberation Sans',sans-serif">N</div>
<div class="abs" style="left:581.3px;top:746.9px;width:21.8px;height:22px;background:#1A98FF"></div>
<div class="t" style="left:581.3px;top:749.2px;width:21.8px;text-align:center;font-size:6.6px;line-height:6.2px;font-weight:bold;color:#0E2A5C;letter-spacing:-0.2px;font-family:'Liberation Sans',sans-serif">prime<br>video</div>
<svg style="left:585px;top:762.4px" width="14.6" height="4.4" viewBox="0 0 14.6 4.4"><path d="M0.6 0.8 C4 3.8 10 3.8 13.4 1.2" fill="none" stroke="#0E2A5C" stroke-width="1"/><path d="M11.6 0.6 L13.8 0.8 L13.2 2.8" fill="none" stroke="#0E2A5C" stroke-width="0.8"/></svg>
<svg style="left:626.2px;top:746.6px" width="21" height="21.6" viewBox="0 0 21 21.6"><defs><radialGradient id="ff1" cx="0.7" cy="0.15" r="1"><stop offset="0" stop-color="#FFE63A"/><stop offset="0.35" stop-color="#FF9A1F"/><stop offset="0.7" stop-color="#FF3D45"/><stop offset="1" stop-color="#E8205E"/></radialGradient><linearGradient id="ff2" x1="0" y1="0" x2="1" y2="1"><stop offset="0" stop-color="#9059FF"/><stop offset="1" stop-color="#5B3BD8"/></linearGradient></defs><path d="M10.5 21.2 C4.6 21.2 0.4 16.8 0.4 11.6 C0.4 8.8 1.6 6.6 2.8 5.4 C2.8 6.4 3.2 7.2 3.6 7.6 C4 5 6 3.6 7.6 3 C8.8 2.4 10.4 1.2 10.8 0.2 C12.6 1.4 13.4 3.2 13.6 4.4 C15 3.6 16 2.4 16.2 1.6 C19 4 20.6 7.8 20.6 11.2 C20.6 17 16.2 21.2 10.5 21.2z" fill="url(#ff1)"/><circle cx="10" cy="12" r="4.8" fill="url(#ff2)"/><path d="M5.2 11 C6 8.6 8.4 8.8 9.6 9.6 C11 10.4 12.6 9.6 13 8.6 C14.6 10 15.4 12.6 14.2 14.8 C12.6 17.6 8.6 17.8 6.6 15.8 C9 16.4 11 15 11 13.6 C9 14.2 5.8 13.4 5.2 11z" fill="#FF8A24"/></svg>
<svg style="left:670.4px;top:748.6px" width="21.4" height="19" viewBox="0 0 21.4 19"><defs><linearGradient id="mn" x1="0" y1="0" x2="1" y2="1"><stop offset="0" stop-color="#1F3FC8"/><stop offset="0.5" stop-color="#5C86E6"/><stop offset="1" stop-color="#C9DAF6"/></linearGradient></defs><path d="M5.4 1 L20.6 2.2 L19.4 13.2 L4.8 11.6z" fill="#D8DCE4"/><path d="M6.6 2.4 L19.4 3.4 L18.4 12 L6 10.6z" fill="url(#mn)"/><path d="M10.2 12.4 L14.4 12.8 L14.8 15.6 L9 15.2z" fill="#B8BCC4"/><ellipse cx="12" cy="16.8" rx="5.2" ry="1.8" fill="#E0E3E8"/><rect x="0.6" y="5.4" width="4.6" height="9" rx="1" fill="#A8ADB4"/><circle cx="2.4" cy="7.2" r="1" fill="#4AC24A"/><path d="M11 7.6 l1.6 1.8 2.8-4.2" stroke="#fff" stroke-width="1" fill="none"/></svg>
<div class="abs" style="left:704.3px;top:740.1px;width:44px;height:35.9px;background:rgba(255,255,255,0.22)"></div>
<svg style="left:715px;top:747px" width="22" height="22" viewBox="0 0 15 15.5"><path d="M1.2 2.2 L6 0.4 L10.6 1.2 L11.4 3.4 L14.4 5.4 L13.4 8.6 L14.6 13.2 L10.2 15 L4 14.6 L0.4 12 Z" fill="url(#pcg)"/><path d="M10.8 3.2 L13.2 3 L14.4 5.6 L12.6 7.6 Z" fill="#07C3F2"/><rect x="2.7" y="2.3" width="9.6" height="9.9" fill="#000"/><text x="3.5" y="7.4" font-family="Liberation Sans,sans-serif" font-weight="bold" font-size="5.3" fill="#fff" letter-spacing="-0.15">PC</text><rect x="3.8" y="10" width="3" height="0.8" fill="#fff"/></svg>
<div class="abs" style="left:395.8px;top:774.1px;width:37.0px;height:1.9px;background:#F3E3A2"></div>
<div class="abs" style="left:440.4px;top:774.1px;width:36.6px;height:1.9px;background:#F3E3A2"></div>
<div class="abs" style="left:663.2px;top:774.1px;width:36.8px;height:1.9px;background:#F3E3A2"></div>
<div class="abs" style="left:704.3px;top:774.1px;width:44.0px;height:1.9px;background:#F3E3A2"></div>
<div class="abs" style="left:425.6px;top:774.1px;width:7.2px;height:1.9px;background:#B9AC7A"></div>
<svg style="left:1042.3px;top:748.7px" width="18.6" height="18.6" viewBox="0 0 18.6 18.6"><defs><linearGradient id="sun" x1="0.15" y1="0.1" x2="0.85" y2="0.9"><stop offset="0" stop-color="#FBC02D"/><stop offset="0.5" stop-color="#F7941E"/><stop offset="1" stop-color="#EE6A1A"/></linearGradient></defs><circle cx="9.3" cy="9.3" r="9.2" fill="url(#sun)"/></svg>
<div class="t" id="k_temp" style="transform:scaleX(0.7973);transform-origin:0 0;left:1069.9px;top:749.9px;font-size:14.6px;line-height:18px;color:#fff;font-family:'Liberation Sans',sans-serif">30°C</div>
<div class="t" id="k_gun" style="transform:scaleX(0.8447);transform-origin:0 0;left:1104.2px;top:749.9px;font-size:14.6px;line-height:18px;color:#fff;font-family:'Liberation Sans',sans-serif">Güneşli</div>
<svg style="left:1167.4px;top:755.4px" width="13" height="7" viewBox="0 0 13 7"><path d="M0.6 6.4 L6.5 0.8 L12.4 6.4" fill="none" stroke="#fff" stroke-width="1.1"/></svg>
<svg style="left:1188px;top:752px" width="15.4" height="12" viewBox="0 0 15.4 12"><g fill="none" stroke="#fff" stroke-width="1"><path d="M3.4 0.6 H14.8 V8.6 H3.4 M9 8.6 V11 M6 11.2 H12"/><path d="M0.5 1.2 H2.9 V4 H0.5z M1.7 4 V8.6 H3.6"/></g></svg>
<svg style="left:1209.2px;top:752.6px" width="15.2" height="10.4" viewBox="0 0 15.2 10.4"><path d="M3.6 10 a3.2 3.2 0 0 1-.4-6.4 a4.2 4.2 0 0 1 7.8-1 a3.8 3.8 0 0 1 1.4 7.4z" fill="#E8E8EA"/><path d="M3 10 L12.4 5.6 a3.8 3.8 0 0 1-.2 4.4z" fill="#C4C4C8"/></svg>
<svg style="left:1230.8px;top:752.6px" width="15.6" height="10.4" viewBox="0 0 15.6 10.4"><rect x="1.6" y="2.2" width="12.4" height="7.4" rx="0.8" fill="#fff"/><rect x="14" y="4.4" width="1.3" height="3" fill="#fff"/><path d="M0.4 0.6 H3 V2.6 H0.4z" fill="none" stroke="#fff" stroke-width="0.8"/></svg>
<svg style="left:1252.4px;top:752px" width="15.6" height="12" viewBox="0 0 15.6 12"><g fill="none" stroke="#fff" stroke-width="1"><path d="M0.6 4 H2.8 L5.8 1 V11 L2.8 8 H0.6z"/><path d="M8 4.2 a2.6 2.6 0 0 1 0 3.6"/><path d="M10 2.6 a5 5 0 0 1 0 6.8" opacity=".9"/><path d="M12.2 0.8 a7.6 7.6 0 0 1 0 10.4" opacity=".45"/></g></svg>
<div class="t" id="k_time" style="transform:scaleX(0.8768);transform-origin:0 0;left:1289.6px;top:744.2px;font-size:10.8px;line-height:12px;color:#fff;font-family:'Liberation Sans',sans-serif">16:33</div>
<div class="t" id="k_date" style="transform:scaleX(0.9103);transform-origin:0 0;left:1276.8px;top:760.4px;font-size:10.8px;line-height:12px;color:#fff;font-family:'Liberation Sans',sans-serif">27.08.2023</div>
<svg style="left:1343px;top:750.8px" width="15.2" height="14.6" viewBox="0 0 15.2 14.6"><path d="M0.6 0.6 H14.6 V11.2 H9.4 L7.6 13.4 L5.8 11.2 H0.6z" fill="none" stroke="#fff" stroke-width="1.1"/></svg>
<div class="abs" style="left:1376px;top:740.1px;width:1px;height:35.9px;background:#77777D"></div>
</body></html>
